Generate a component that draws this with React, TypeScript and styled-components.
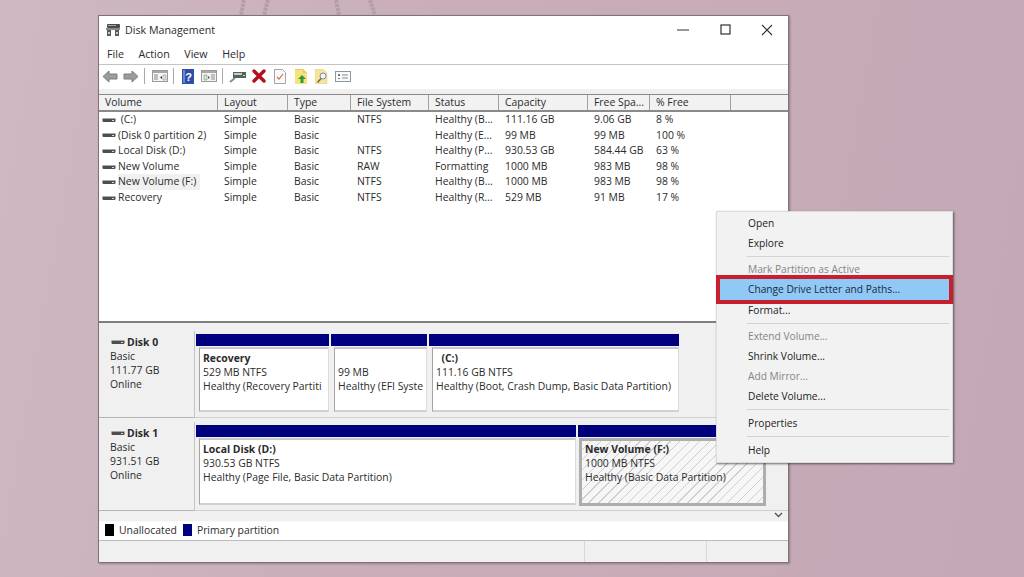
import React from 'react';
import styled, { createGlobalStyle, css } from 'styled-components';

const GlobalStyle = createGlobalStyle`
  html, body {
    margin: 0;
    padding: 0;
    background: #c8adb9;
  }
  * {
    box-sizing: border-box;
  }
`;

const Page = styled.div`
  position: relative;
  width: 1024px;
  height: 577px;
  overflow: hidden;
  padding: 15px 0 0 98px;
  background: linear-gradient(100deg, #cfb8c2 0%, #c9aeba 40%, #c4a8b5 100%);
  font-family: 'Open Sans', 'Noto Sans', sans-serif;
  font-size: 10.4px;
  color: #2b2b2b;
`;

const Ropes = styled.svg`
  position: absolute;
  left: 230px;
  top: 0;
  opacity: 0.6;
`;

const Window = styled.div`
  position: relative;
  display: flex;
  flex-direction: column;
  width: 691px;
  height: 548px;
  background: #fff;
  border: 1px solid #7d7478;
  box-shadow: 1px 1px 2px rgba(70, 50, 60, 0.4);
`;

const TitleBar = styled.div`
  display: flex;
  align-items: center;
  flex: none;
  height: 27px;
  padding-left: 6px;
  gap: 4px;
  font-size: 10.7px;
`;

const WindowButtons = styled.div`
  display: flex;
  margin-left: auto;
`;

const WindowButton = styled.div`
  display: flex;
  align-items: center;
  justify-content: center;
  width: 42px;
  height: 25px;
`;

const MenuBar = styled.div`
  display: flex;
  flex: none;
  align-items: center;
  height: 22px;
  padding-left: 8px;
  gap: 14.5px;
  font-size: 10.7px;
  border-bottom: 1px solid #c4c4c4;
`;

const Toolbar = styled.div`
  display: flex;
  flex: none;
  align-items: center;
  height: 24px;
  padding: 0 0 2px 1px;
  gap: 1px;
`;

const ToolSlot = styled.div`
  display: flex;
  align-items: center;
  justify-content: center;
  flex: none;
  width: 20px;
  height: 20px;
`;

const ToolSeparator = styled.div`
  flex: none;
  width: 1px;
  height: 16px;
  margin: 0 3.5px 0 2px;
  background: #a8a8a8;
`;

const ToolbarGap = styled.div`
  flex: none;
  height: 5px;
  background: #efefef;
`;

const ListPanel = styled.div`
  flex: none;
  height: 227px;
  background: #fff;
`;

const ListGrid = css`
  display: grid;
  grid-template-columns: 119px 70px 63px 78px 70px 89px 62px 81px 1fr;
`;

const ListHeader = styled.div`
  ${ListGrid};
  height: 18px;
  background: #f2f2f2;
  border-top: 1px solid #8a8a8a;
  border-bottom: 2px solid #8a8a8a;
`;

const HeaderCell = styled.div`
  padding: 0 0 0 6px;
  line-height: 15px;
  border-right: 1px solid #a0a0a0;
  white-space: nowrap;
  overflow: hidden;

  &:last-child {
    border-right: 0;
  }
`;

const ListRow = styled.div`
  ${ListGrid};
  height: 15.6px;
  line-height: 15.6px;
`;

const Cell = styled.div`
  padding-left: 6px;
  white-space: nowrap;
  overflow: hidden;
`;

const VolumeCell = styled.div`
  display: flex;
  align-items: center;
  padding-left: 3px;
  gap: 2px;
  white-space: nowrap;
`;

const VolumeName = styled.span<{ $selected?: boolean }>`
  padding: 0 4px 0 0;
  background: ${(p) => (p.$selected ? '#f0f0f0' : 'transparent')};
`;

const SplitBar = styled.div`
  flex: none;
  height: 4px;
  background: #f0f0f0;
  border-top: 2px solid #7f7f7f;
`;

const DiskPanel = styled.div`
  flex: 1;
  display: flex;
  flex-direction: column;
  min-height: 0;
  background: #f0f0f0;
`;

const DiskRow = styled.div<{ $height: number }>`
  display: flex;
  flex: none;
  height: ${(p) => p.$height}px;
`;

const DiskLabel = styled.div<{ $top: number }>`
  flex: none;
  width: 96px;
  margin-top: ${(p) => p.$top}px;
  padding: 4px 0 0 11px;
  line-height: 14px;
  background: #f0f0f0;
  border-right: 1px solid #c4c4c4;
  border-bottom: 1px solid #b4b4b4;
`;

const DiskName = styled.div`
  display: flex;
  align-items: center;
  gap: 2px;
  margin-left: 1px;
  font-weight: 700;
`;

const Partitions = styled.div<{ $top: number }>`
  display: flex;
  flex: 1;
  gap: 2px;
  padding: ${(p) => p.$top}px 0 4px 1px;
  border-bottom: 1px solid #d0d0d0;
`;

const Partition = styled.div<{ $width: number }>`
  display: flex;
  flex-direction: column;
  flex: none;
  width: ${(p) => p.$width}px;
`;

const PartitionBar = styled.div`
  flex: none;
  height: 12px;
  background: #00007f;
`;

const PartitionBox = styled.div<{ $selected?: boolean }>`
  flex: 1;
  margin: 1px 0 1px 3px;
  padding: 2px 0 0 3px;
  line-height: 14px;
  white-space: nowrap;
  overflow: hidden;
  background: #fff;
  border-left: 1px solid #a4a4a4;
  border-top: 2px solid #c8c8c8;
  border-right: 1px solid #dcdcdc;
  border-bottom: 2px solid #d0d0d0;

  ${(p) =>
    p.$selected &&
    css`
      margin: 1px 0 0 1px;
      padding: 1px 0 0 3px;
      border: 3px solid #adadad;
      background: repeating-linear-gradient(
        135deg,
        #f6f6f6 0,
        #f6f6f6 6px,
        #cfcfcf 6px,
        #cfcfcf 7px
      );
    `}
`;

const PartitionTitle = styled.div`
  font-weight: 700;
  min-height: 14px;
`;

const ScrollHint = styled.div`
  display: flex;
  justify-content: flex-end;
  flex: none;
  height: 9px;
  padding-right: 5px;
`;

const Legend = styled.div`
  display: flex;
  flex: none;
  align-items: center;
  height: 20px;
  padding: 0 0 2px 6px;
  gap: 5px;
  border-top: 1px solid #fafafa;
  border-bottom: 1px solid #bcbcbc;
`;

const Swatch = styled.span<{ $color: string }>`
  width: 9px;
  height: 12px;
  background: ${(p) => p.$color};
`;

const LegendText = styled.span`
  margin-right: 1px;
`;

const StatusBar = styled.div`
  display: grid;
  flex: none;
  height: 21px;
  grid-template-columns: 486px 122px 1fr;
  background: #f0f0f0;
`;

const StatusCell = styled.div`
  border-right: 1px solid #d8d8d8;

  &:last-child {
    border-right: 0;
  }
`;

const ContextMenu = styled.div`
  position: absolute;
  left: 716px;
  top: 211px;
  width: 237px;
  height: 252px;
  padding: 1px 3px;
  background: #f2f2f2;
  border: 1px solid #dcdcdc;
  box-shadow: 1px 1px 2px rgba(40, 30, 35, 0.65);
  color: #222;
  font-size: 10.2px;
`;

const MenuItem = styled.div<{ $disabled?: boolean; $highlight?: boolean }>`
  position: relative;
  height: ${(p) => (p.$highlight ? 21 : 20)}px;
  padding-left: 28px;
  line-height: 20px;
  color: ${(p) => (p.$disabled ? '#858585' : '#222')};

  ${(p) =>
    p.$highlight &&
    css`
      background: #90c8f6;
      color: #1a2a3a;
      outline: 4px solid #c61f2e;
      z-index: 1;
    `}
`;

const MenuSeparator = styled.div<{ $wide?: boolean }>`
  height: ${(p) => (p.$wide ? 7 : 6)}px;
  margin-left: 27px;
  padding-top: 3px;

  &::after {
    content: '';
    display: block;
    height: 1px;
    background: #d4d4d4;
  }
`;

const DriveIcon = () => (
  <svg width="14" height="6" viewBox="0 0 14 6">
    <rect x="0.5" y="1" width="13" height="4" rx="1" fill="#4e4e4e" />
    <rect x="1" y="1" width="12" height="1" fill="#a8a8a8" />
    <rect x="10" y="3" width="2" height="1" fill="#d8d8d8" />
  </svg>
);

const AppIcon = () => (
  <svg width="16" height="14" viewBox="0 0 16 14">
    <rect x="2" y="1" width="13" height="4" rx="1" fill="#4a4a4a" />
    <rect x="3" y="2" width="8" height="1" fill="#a8a8a8" />
    <rect x="1" y="5" width="14" height="2" fill="#8b8b8b" />
    <rect x="2" y="7" width="4" height="6" fill="#5a5a5a" />
    <rect x="10" y="7" width="4" height="6" fill="#5a5a5a" />
    <rect x="3" y="9" width="2" height="2" fill="#c9c9c9" />
    <rect x="11" y="9" width="2" height="2" fill="#c9c9c9" />
  </svg>
);

const ArrowIcon = ({ flip }: { flip?: boolean }) => (
  <svg width="16" height="13" viewBox="0 0 16 13" style={flip ? { transform: 'scaleX(-1)' } : undefined}>
    <path d="M1 6.5 7 1v3h8v5H7v3z" fill="#9c9c9c" stroke="#7c7c7c" />
  </svg>
);

const PaneIcon = ({ flip }: { flip?: boolean }) => (
  <svg width="16" height="14" viewBox="0 0 16 14">
    <rect x="0.5" y="1.5" width="15" height="11" fill="#f4f4f4" stroke="#9a9a9a" />
    <rect x="1" y="2" width="14" height="2" fill="#a9a9a9" />
    {flip ? (
      <>
        <path d="M3 6h3v5H3z" fill="#d9e7d9" stroke="#7b8f7b" strokeWidth="0.6" />
        <path d="M7 7l2 1.5L7 10z" fill="#2f6f3a" />
        <path d="M10 6h4M10 8h4M10 10h4" stroke="#8a8a8a" />
      </>
    ) : (
      <>
        <path d="M2 6h4M2 8h4M2 10h4" stroke="#8a8a8a" />
        <path d="M10 7l-2 1.5 2 1.5z" fill="#3b3b3b" />
        <path d="M11 6h3v5h-3z" fill="#dde3ea" stroke="#8a94a0" strokeWidth="0.6" />
      </>
    )}
  </svg>
);

const HelpIcon = () => (
  <svg width="12" height="15" viewBox="0 0 12 15">
    <rect width="12" height="15" fill="#2e4ea8" />
    <rect x="1" y="1" width="2" height="13" fill="#6d87cf" />
    <text x="6.5" y="12" fontSize="11" fontWeight="700" fontFamily="Liberation Sans, sans-serif" fill="#fff" textAnchor="middle">
      ?
    </text>
  </svg>
);

const DiskToolIcon = () => (
  <svg width="17" height="13" viewBox="0 0 17 13">
    <path d="M1 12 6 8" stroke="#8c8c8c" strokeWidth="2" />
    <rect x="4" y="2" width="13" height="6" fill="#56635a" />
    <rect x="5" y="3" width="8" height="2" fill="#c2cfc6" />
    <rect x="14" y="5" width="2" height="1" fill="#b8e0b8" />
  </svg>
);

const DeleteIcon = () => (
  <svg width="14" height="14" viewBox="0 0 14 14">
    <path d="M2 2l10 10M12 2 2 12" stroke="#b3121d" strokeWidth="3.4" strokeLinecap="round" />
  </svg>
);

const CheckDocIcon = () => (
  <svg width="12" height="15" viewBox="0 0 12 15">
    <path d="M.5.5h8l3 3v11H.5z" fill="#fbfbfb" stroke="#a4a4a4" />
    <path d="M3 8l2 2 4-5" fill="none" stroke="#c9753f" strokeWidth="1.2" />
  </svg>
);

const FolderUpIcon = () => (
  <svg width="12" height="15" viewBox="0 0 12 15">
    <path d="M0 0h8l4 4v11H0z" fill="#f7e27c" />
    <path d="M0 0h8l4 4H8V1H0z" fill="#e6cc66" />
    <path d="M7 6 3 10h2.5v4h3v-4H11z" fill="#2f9a3c" />
  </svg>
);

const FolderSearchIcon = () => (
  <svg width="13" height="15" viewBox="0 0 13 15">
    <path d="M0 0h8l4 4v11H0z" fill="#f5e49a" stroke="#d8c98a" strokeWidth="0.5" />
    <circle cx="8" cy="7" r="3" fill="#eef4f8" stroke="#7c8a94" />
    <path d="M6 9.5 2.5 13.5" stroke="#7c6a4c" strokeWidth="1.6" />
  </svg>
);

const PropsIcon = () => (
  <svg width="16" height="13" viewBox="0 0 16 13">
    <rect x="0.5" y="1.5" width="15" height="10" fill="#fafafa" stroke="#8a98a4" />
    <path d="M3 4h2v2H3zM3 8h2v1H3z" fill="#5f7f9c" />
    <path d="M7 5h6M7 8h6" stroke="#8a8a8a" />
  </svg>
);

const columns = ['Volume', 'Layout', 'Type', 'File System', 'Status', 'Capacity', 'Free Spa...', '% Free', ''];

const volumes = [
  { name: '\u00a0(C:)', fs: 'NTFS', status: 'Healthy (B...', capacity: '111.16 GB', free: '9.06 GB', pct: '8 %' },
  { name: '(Disk 0 partition 2)', fs: '', status: 'Healthy (E...', capacity: '99 MB', free: '99 MB', pct: '100 %' },
  { name: 'Local Disk (D:)', fs: 'NTFS', status: 'Healthy (P...', capacity: '930.53 GB', free: '584.44 GB', pct: '63 %' },
  { name: 'New Volume', fs: 'RAW', status: 'Formatting', capacity: '1000 MB', free: '983 MB', pct: '98 %' },
  { name: 'New Volume (F:)', fs: 'NTFS', status: 'Healthy (B...', capacity: '1000 MB', free: '983 MB', pct: '98 %', selected: true },
  { name: 'Recovery', fs: 'NTFS', status: 'Healthy (R...', capacity: '529 MB', free: '91 MB', pct: '17 %' },
];

const disks = [
  {
    name: 'Disk 0',
    size: '111.77 GB',
    height: 93,
    barTop: 9,
    labelTop: 6,
    partitions: [
      { width: 133, title: 'Recovery', size: '529 MB NTFS', status: 'Healthy (Recovery Partiti' },
      { width: 96, title: '', size: '99 MB', status: 'Healthy (EFI Syste' },
      { width: 250, title: '\u00a0\u00a0(C:)', size: '111.16 GB NTFS', status: 'Healthy (Boot, Crash Dump, Basic Data Partition)' },
    ],
  },
  {
    name: 'Disk 1',
    size: '931.51 GB',
    height: 93,
    barTop: 7,
    labelTop: 4,
    partitions: [
      { width: 380, title: 'Local Disk  (D:)', size: '930.53 GB NTFS', status: 'Healthy (Page File, Basic Data Partition)' },
      { width: 188, title: 'New Volume  (F:)', size: '1000 MB NTFS', status: 'Healthy (Basic Data Partition)', selected: true },
    ],
  },
];

export default function App() {
  return (
    <Page>
      <GlobalStyle />
      <Ropes width="160" height="15" viewBox="0 0 160 15">
        <path d="M14 0l-3 15M38 0l-4 15M106 0l3 15M140 0l5 15" stroke="#a89098" strokeWidth="4" strokeDasharray="3 1" fill="none" />
      </Ropes>
      <Window>
        <TitleBar>
          <AppIcon />
          <span>Disk Management</span>
          <WindowButtons>
            <WindowButton>
              <svg width="12" height="2"><rect width="12" height="1" y="0.5" fill="#333" /></svg>
            </WindowButton>
            <WindowButton>
              <svg width="11" height="11"><rect x="1" y="1" width="9" height="9" fill="none" stroke="#333" strokeWidth="1.2" /></svg>
            </WindowButton>
            <WindowButton>
              <svg width="12" height="12"><path d="M1 1l10 10M11 1 1 11" stroke="#333" strokeWidth="1.1" /></svg>
            </WindowButton>
          </WindowButtons>
        </TitleBar>
        <MenuBar>
          <span>File</span>
          <span>Action</span>
          <span>View</span>
          <span>Help</span>
        </MenuBar>
        <Toolbar>
          <ToolSlot><ArrowIcon /></ToolSlot>
          <ToolSlot><ArrowIcon flip /></ToolSlot>
          <ToolSeparator />
          <ToolSlot><PaneIcon /></ToolSlot>
          <ToolSeparator />
          <ToolSlot><HelpIcon /></ToolSlot>
          <ToolSlot><PaneIcon flip /></ToolSlot>
          <ToolSeparator />
          <ToolSlot><DiskToolIcon /></ToolSlot>
          <ToolSlot><DeleteIcon /></ToolSlot>
          <ToolSlot><CheckDocIcon /></ToolSlot>
          <ToolSlot><FolderUpIcon /></ToolSlot>
          <ToolSlot><FolderSearchIcon /></ToolSlot>
          <ToolSlot><PropsIcon /></ToolSlot>
        </Toolbar>
        <ToolbarGap />
        <ListPanel>
          <ListHeader>
            {columns.map((c, i) => (
              <HeaderCell key={i}>{c}</HeaderCell>
            ))}
          </ListHeader>
          {volumes.map((v) => (
            <ListRow key={v.name}>
              <VolumeCell>
                <DriveIcon />
                <VolumeName $selected={v.selected}>{v.name}</VolumeName>
              </VolumeCell>
              <Cell>Simple</Cell>
              <Cell>Basic</Cell>
              <Cell>{v.fs}</Cell>
              <Cell>{v.status}</Cell>
              <Cell>{v.capacity}</Cell>
              <Cell>{v.free}</Cell>
              <Cell>{v.pct}</Cell>
            </ListRow>
          ))}
        </ListPanel>
        <SplitBar />
        <DiskPanel>
          {disks.map((d) => (
            <DiskRow key={d.name} $height={d.height}>
              <DiskLabel $top={d.labelTop}>
                <DiskName>
                  <DriveIcon />
                  {d.name}
                </DiskName>
                <div>Basic</div>
                <div>{d.size}</div>
                <div>Online</div>
              </DiskLabel>
              <Partitions $top={d.barTop}>
                {d.partitions.map((p) => (
                  <Partition key={p.size} $width={p.width}>
                    <PartitionBar />
                    <PartitionBox $selected={p.selected}>
                      <PartitionTitle>{p.title}</PartitionTitle>
                      <div>{p.size}</div>
                      <div>{p.status}</div>
                    </PartitionBox>
                  </Partition>
                ))}
              </Partitions>
            </DiskRow>
          ))}
          <ScrollHint>
            <svg width="9" height="8" viewBox="0 0 9 8">
              <path d="M1 2l3.5 3.5L8 2" fill="none" stroke="#555" strokeWidth="1.4" />
            </svg>
          </ScrollHint>
        </DiskPanel>
        <Legend>
          <Swatch $color="#000" />
          <LegendText>Unallocated</LegendText>
          <Swatch $color="#00007f" />
          <LegendText>Primary partition</LegendText>
        </Legend>
        <StatusBar>
          <StatusCell />
          <StatusCell />
          <StatusCell />
        </StatusBar>
      </Window>
      <ContextMenu>
        <MenuItem>Open</MenuItem>
        <MenuItem>Explore</MenuItem>
        <MenuSeparator />
        <MenuItem $disabled>Mark Partition as Active</MenuItem>
        <MenuItem $highlight>Change Drive Letter and Paths...</MenuItem>
        <MenuItem>Format...</MenuItem>
        <MenuSeparator />
        <MenuItem $disabled>Extend Volume...</MenuItem>
        <MenuItem>Shrink Volume...</MenuItem>
        <MenuItem $disabled>Add Mirror...</MenuItem>
        <MenuItem>Delete Volume...</MenuItem>
        <MenuSeparator $wide />
        <MenuItem>Properties</MenuItem>
        <MenuSeparator $wide />
        <MenuItem>Help</MenuItem>
      </ContextMenu>
    </Page>
  );
}
